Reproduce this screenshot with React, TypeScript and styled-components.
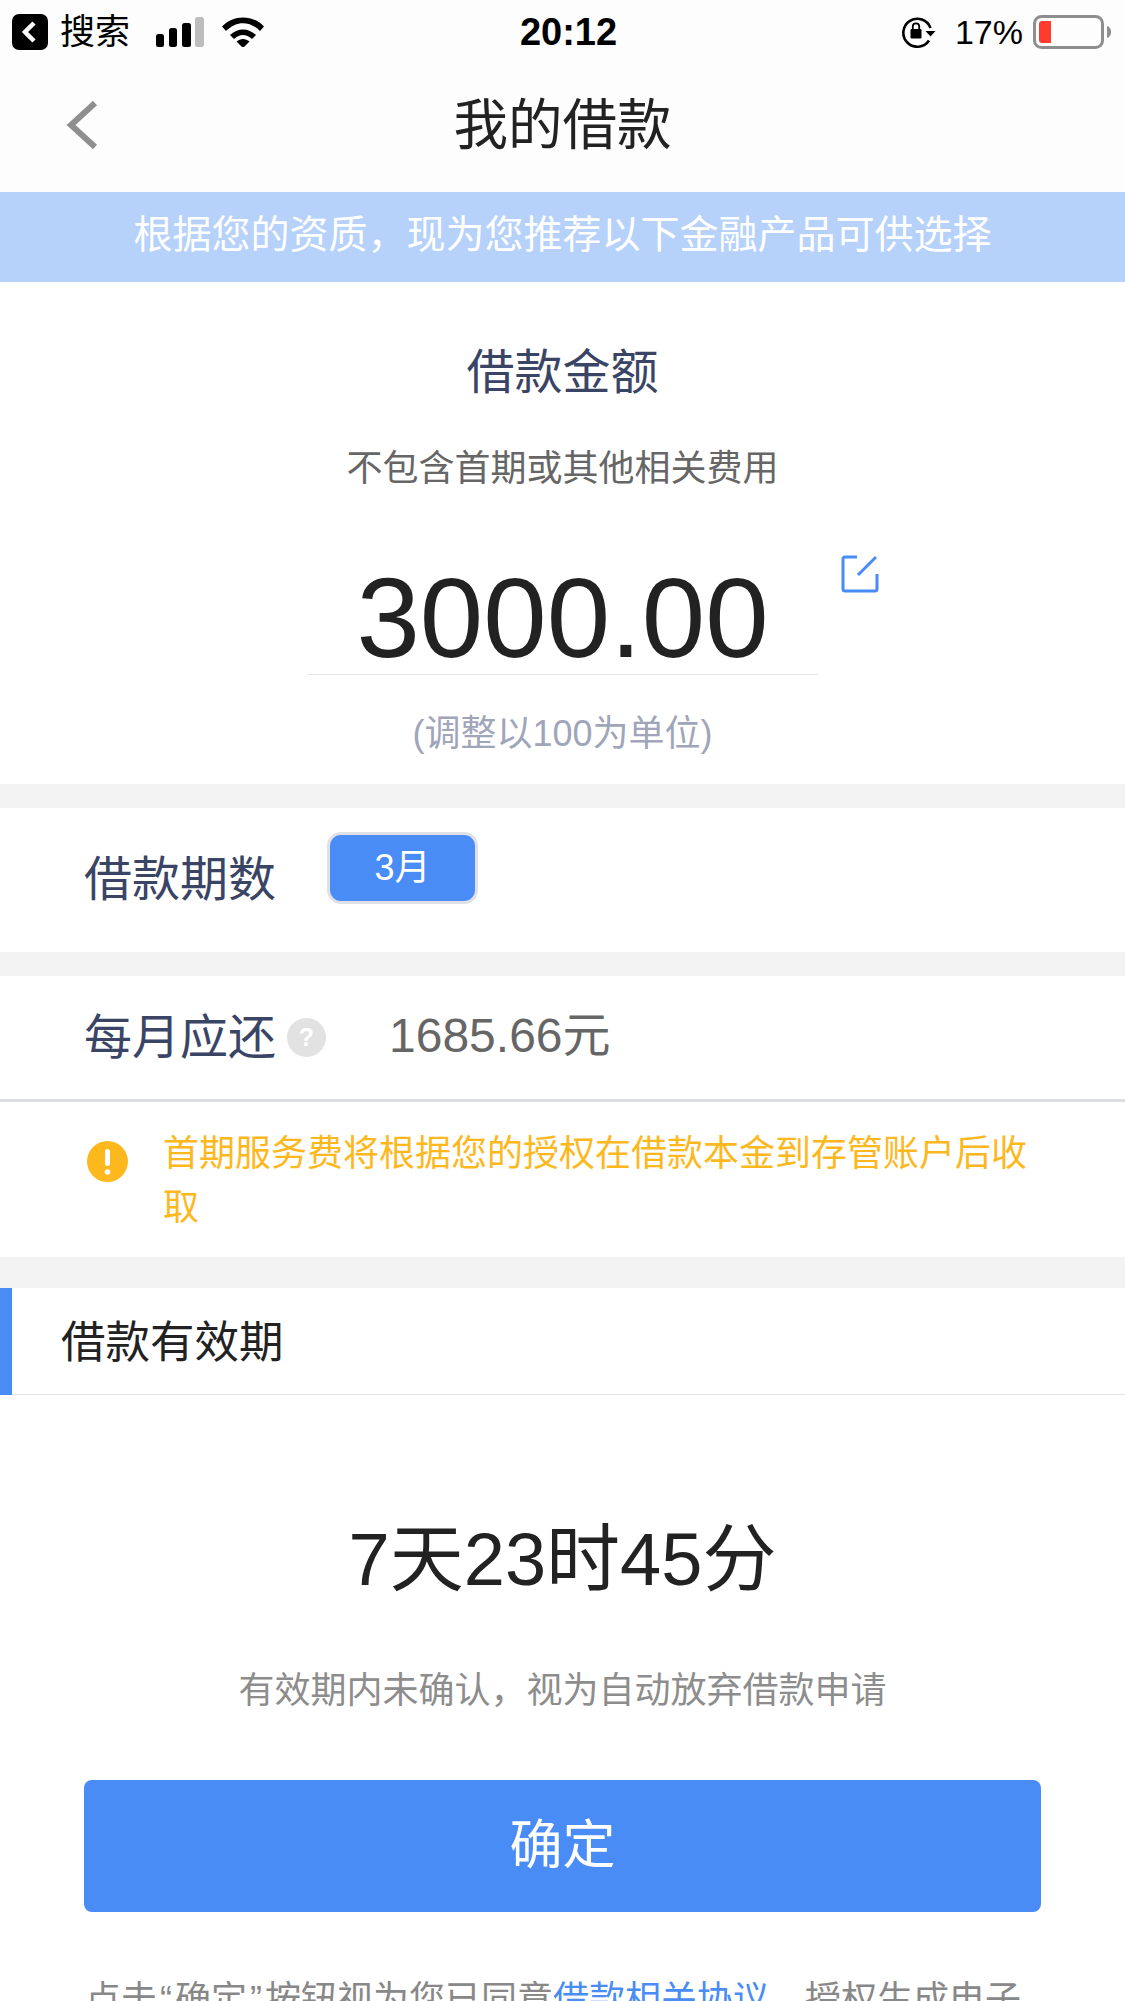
import React from 'react'
import styled, { createGlobalStyle } from 'styled-components'

const FONT = `"Liberation Sans", "Noto Sans CJK SC", sans-serif`

const GlobalStyle = createGlobalStyle`
  html, body {
    margin: 0;
    padding: 0;
    background: #fff;
    overflow: hidden;
  }
  * { box-sizing: border-box; }
`

const Screen = styled.div`
  width: 1125px;
  height: 2001px;
  overflow: hidden;
  background: #fff;
  font-family: ${FONT};
`

const StatusBar = styled.div`
  height: 64px;
  background: #fdfdfd;
  display: grid;
  grid-template-columns: 1fr auto 1fr;
  align-items: center;
  color: #000;
`

const StatusLeft = styled.div`
  display: flex;
  align-items: center;
  padding-left: 12px;
`

const StatusRight = styled.div`
  display: flex;
  align-items: center;
  justify-content: flex-end;
  padding-right: 14px;
`

const BackBadge = styled.svg`
  width: 36px;
  height: 36px;
  margin-right: 12px;
`

const Carrier = styled.span`
  font-size: 35px;
  line-height: 40px;
  margin-right: 26px;
`

const Clock = styled.span`
  margin-left: 12px;
  font-size: 38px;
  font-weight: 700;
  line-height: 40px;
`

const Percent = styled.span`
  font-size: 34px;
  line-height: 40px;
  margin: 0 10px 0 19px;
`

const NavBar = styled.div`
  height: 128px;
  background: #fdfdfd;
  display: flex;
  align-items: center;
  justify-content: center;
  position: relative;
`

const NavBack = styled.svg`
  position: absolute;
  left: 66px;
  top: 37px;
  width: 32px;
  height: 48px;
`

const NavTitle = styled.h1`
  margin: 0 0 4px;
  font-size: 54.5px;
  font-weight: 400;
  color: #222;
  line-height: 64px;
`

const Banner = styled.div`
  height: 90px;
  background: #b5d1fa;
  color: #fff;
  font-size: 39px;
  line-height: 86px;
  text-align: center;
  opacity: 0.98;
`

const AmountSection = styled.section`
  height: 502px;
  padding-top: 61px;
  display: flex;
  flex-direction: column;
  align-items: center;
`

const AmountTitle = styled.div`
  font-size: 48px;
  line-height: 60px;
  color: #3a4566;
`

const AmountSub = styled.div`
  margin-top: 46px;
  font-size: 36px;
  line-height: 40px;
  color: #666;
`

const AmountField = styled.div`
  position: relative;
  width: 510px;
  margin-top: 49px;
  padding-top: 23px;
  height: 137px;
  border-bottom: 1px solid #e6e6e6;
  text-align: center;
  font-size: 114px;
  line-height: 114px;
  color: #222;
`

const EditIcon = styled.svg`
  position: absolute;
  right: -61px;
  top: 17px;
  width: 38px;
  height: 38px;
`

const AmountHint = styled.div`
  margin-top: 39px;
  font-size: 36px;
  line-height: 40px;
  color: #a0a5ba;
`

const Gap = styled.div<{ $h: number }>`
  height: ${p => p.$h}px;
  background: #f3f3f3;
`

const FormRow = styled.div<{ $h: number; $line?: boolean }>`
  height: ${p => p.$h}px;
  padding-left: 84px;
  display: flex;
  align-items: center;
  border-bottom: ${p => (p.$line ? '3px solid #dcdee3' : 'none')};
`

const FormLabel = styled.span`
  font-size: 48px;
  line-height: 60px;
  color: #3a4566;
`

const TermChip = styled.div`
  margin: -24px 0 0 51px;
  width: 151px;
  height: 72px;
  border: 3px solid #dfe1e6;
  border-radius: 14px;
  background: #4a8cf5;
  color: #fff;
  font-size: 36px;
  line-height: 65px;
  text-align: center;
`

const HelpIcon = styled.svg`
  width: 39px;
  height: 39px;
  margin-left: 11px;
`

const MonthlyValue = styled.span`
  margin: 0 0 4px 63px;
  font-size: 48px;
  line-height: 60px;
  color: #666;
`

const Notice = styled.div`
  height: 155px;
  padding: 25px 85px 0 87px;
  display: flex;
  align-items: flex-start;
`

const NoticeIcon = styled.svg`
  flex: none;
  width: 41px;
  height: 41px;
  margin: 14px 35px 0 0;
`

const NoticeText = styled.div`
  width: 870px;
  font-size: 36px;
  line-height: 54px;
  color: #fdb81e;
`

const SectionHead = styled.div`
  height: 107px;
  padding: 0 0 7px 49px;
  border-left: 12px solid #4a8cf5;
  display: flex;
  align-items: center;
  font-size: 44.5px;
  color: #222;
  position: relative;
  &::after {
    content: '';
    position: absolute;
    left: 0;
    right: 0;
    bottom: 0;
    height: 1px;
    background: #e3e3e3;
  }
`

const Countdown = styled.div`
  margin-top: 123px;
  text-align: center;
  font-size: 74px;
  line-height: 84px;
  color: #222;
`

const ExpiryNote = styled.div`
  margin-top: 67px;
  text-align: center;
  font-size: 36px;
  line-height: 44px;
  color: #8d8d8d;
`

const ConfirmButton = styled.button`
  display: block;
  width: 957px;
  height: 132px;
  margin: 67px 0 0 84px;
  padding: 0 0 10px;
  border: 0;
  border-radius: 8px;
  background: #4a8cf5;
  color: #fff;
  font-family: ${FONT};
  font-size: 53px;
`

const Agreement = styled.p`
  margin: 61px 85px 0;
  font-size: 36px;
  line-height: 54px;
  color: #888;
`

const Quote = styled.span`
  padding: 0 3px;
`

const AgreementLink = styled.span`
  color: #4a8cf5;
`

const Signal = () => (
  <svg width="48" height="30" viewBox="0 0 48 30">
    <rect x="0" y="17" width="8" height="13" rx="2.5" fill="#000" />
    <rect x="13" y="11" width="8" height="19" rx="2.5" fill="#000" />
    <rect x="26" y="6" width="9" height="24" rx="2.5" fill="#000" />
    <rect x="39" y="0" width="9" height="30" rx="2.5" fill="#bdbdbd" />
  </svg>
)

const Wifi = () => (
  <svg width="42" height="30" viewBox="0 0 42 30" style={{ marginLeft: 18 }}>
    <path d="M0 9.5C11.5-2.6 30.5-2.6 42 9.5L38 14C27.5 3.6 14.5 3.6 4 14z" fill="#000" />
    <path d="M8 18C15.5 10.5 26.5 10.5 34 18L30 22C24 16.5 18 16.5 12 22z" fill="#000" />
    <path d="M14.5 24.5C18.5 21 23.5 21 27.5 24.5L21 31z" fill="#000" />
  </svg>
)

const OrientationLock = () => (
  <svg width="35" height="32" viewBox="0 0 35 32">
    <path d="M28 24.5A14 14 0 1 1 29.5 12" fill="none" stroke="#000" strokeWidth="2.6" />
    <path d="M24.5 15h10l-5 5.5z" fill="#000" />
    <rect x="9.5" y="13" width="11" height="9.5" rx="1.2" fill="#000" />
    <path d="M11.8 13.5V10.5a3.2 3.2 0 0 1 6.4 0v3" fill="none" stroke="#000" strokeWidth="1.8" />
  </svg>
)

const Battery = () => (
  <svg width="78" height="34" viewBox="0 0 78 34">
    <rect x="1.5" y="1.5" width="68" height="31" rx="7" fill="none" stroke="#8e8e8e" strokeWidth="3" />
    <path d="M6 9a3 3 0 0 1 3-3h9v22H9a3 3 0 0 1-3-3z" fill="#ff3b30" />
    <path d="M74 11c2.5 .5 4 3 4 6s-1.5 5.5-4 6z" fill="#8e8e8e" />
  </svg>
)

export default function App() {
  return (
    <Screen>
      <GlobalStyle />
      <StatusBar>
        <StatusLeft>
          <BackBadge viewBox="0 0 36 36">
            <rect width="36" height="36" rx="7" fill="#000" />
            <path d="M22 9l-9 9 9 9" fill="none" stroke="#fff" strokeWidth="4.5" />
          </BackBadge>
          <Carrier>搜索</Carrier>
          <Signal />
          <Wifi />
        </StatusLeft>
        <Clock>20:12</Clock>
        <StatusRight>
          <OrientationLock />
          <Percent>17%</Percent>
          <Battery />
        </StatusRight>
      </StatusBar>

      <NavBar>
        <NavBack viewBox="0 0 32 48">
          <path d="M29 2L5 24l24 22" fill="none" stroke="#8f8f8f" strokeWidth="6" />
        </NavBack>
        <NavTitle>我的借款</NavTitle>
      </NavBar>

      <Banner>根据您的资质，现为您推荐以下金融产品可供选择</Banner>

      <AmountSection>
        <AmountTitle>借款金额</AmountTitle>
        <AmountSub>不包含首期或其他相关费用</AmountSub>
        <AmountField>
          3000.00
          <EditIcon viewBox="0 0 38 38">
            <path
              d="M16 2H4a2 2 0 0 0-2 2v30a2 2 0 0 0 2 2h30a2 2 0 0 0 2-2V19M17 20L35 2"
              fill="none"
              stroke="#4a8cf5"
              strokeWidth="3"
            />
          </EditIcon>
        </AmountField>
        <AmountHint>(调整以100为单位)</AmountHint>
      </AmountSection>

      <Gap $h={24} />

      <FormRow $h={144}>
        <FormLabel>借款期数</FormLabel>
        <TermChip>3月</TermChip>
      </FormRow>

      <Gap $h={24} />

      <FormRow $h={126} $line>
        <FormLabel>每月应还</FormLabel>
        <HelpIcon viewBox="0 0 39 39">
          <circle cx="19.5" cy="19.5" r="19.5" fill="#e2e2e2" />
          <text x="19.5" y="28" textAnchor="middle" fontSize="25" fontWeight="700" fill="#fff" fontFamily={FONT}>?</text>
        </HelpIcon>
        <MonthlyValue>1685.66元</MonthlyValue>
      </FormRow>

      <Notice>
        <NoticeIcon viewBox="0 0 41 41">
          <circle cx="20.5" cy="20.5" r="20.5" fill="#fdb81e" />
          <rect x="18" y="8" width="5" height="17" rx="2.5" fill="#fff" />
          <circle cx="20.5" cy="31" r="2.8" fill="#fff" />
        </NoticeIcon>
        <NoticeText>首期服务费将根据您的授权在借款本金到存管账户后收取</NoticeText>
      </Notice>

      <Gap $h={31} />

      <SectionHead>借款有效期</SectionHead>

      <Countdown>7天23时45分</Countdown>
      <ExpiryNote>有效期内未确认，视为自动放弃借款申请</ExpiryNote>
      <ConfirmButton>确定</ConfirmButton>
      <Agreement>
        点击<Quote>“</Quote>确定<Quote>”</Quote>按钮视为您已同意<AgreementLink>借款相关协议</AgreementLink>，授权生成电子合同
      </Agreement>
    </Screen>
  )
}
